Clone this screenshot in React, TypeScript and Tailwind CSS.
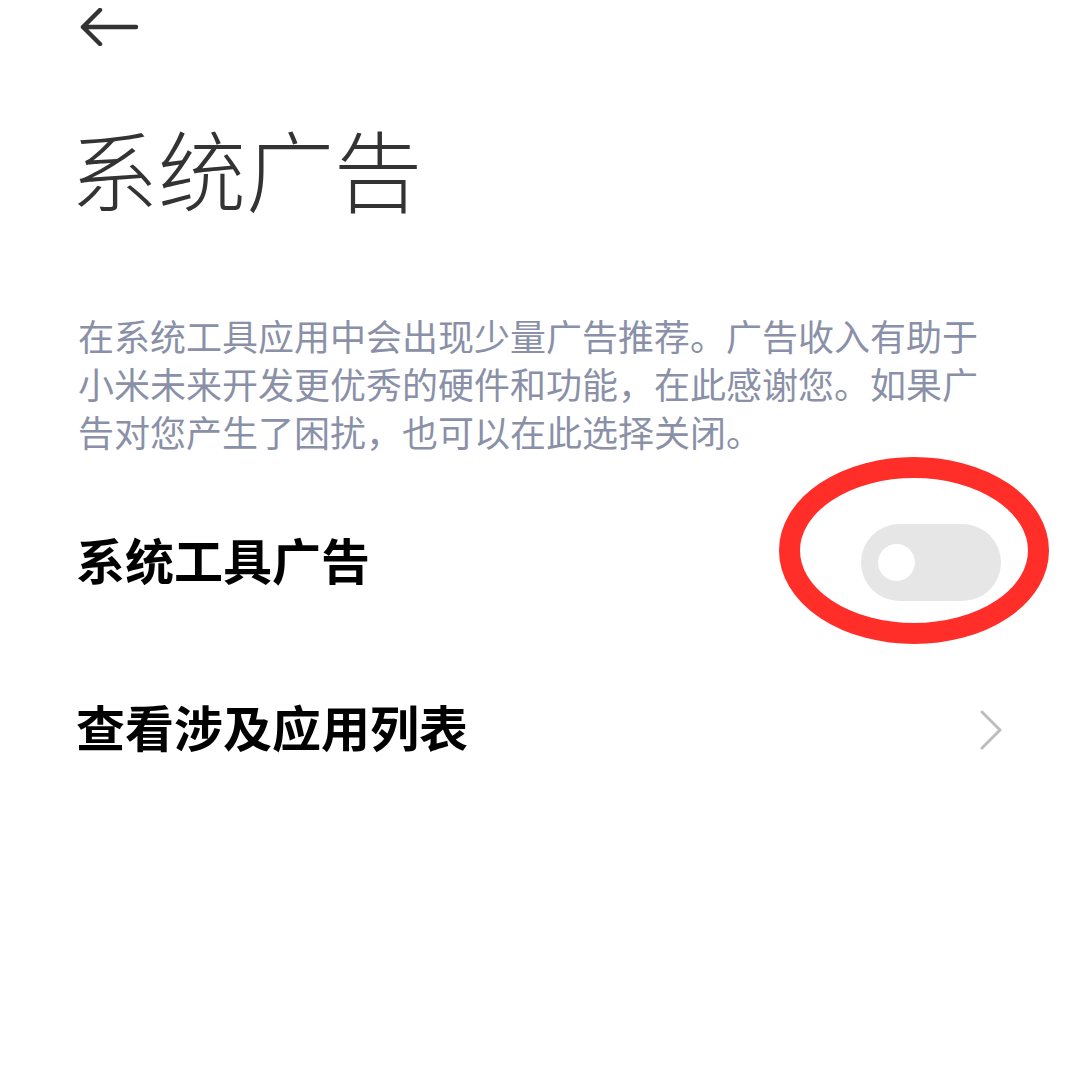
import React from "react";

export default function App() {
  return (
    <div
      className="relative w-[1080px] h-[1080px] bg-white overflow-hidden"
      style={{ fontFamily: '"Noto Sans CJK SC", "Noto Sans", sans-serif' }}
    >
      <div className="pl-[78px] pr-[79px]">
        <div className="h-[52px] flex items-start pt-[8px]">
          <svg width="58" height="38" viewBox="0 0 58 38" fill="none" className="ml-[2px]">
            <path d="M56 19 H3 M20 2 L3 19 L20 36" stroke="#333" strokeWidth="4.5" strokeLinecap="round" strokeLinejoin="round" />
          </svg>
        </div>
        <div className="mt-[71px] h-[88px] ml-[-8px] text-[88px] leading-[88px] font-light text-[#333333]">系统广告</div>
        <div className="mt-[100px] text-[36px] leading-[48px] text-[#8a90a8]">
          在系统工具应用中会出现少量广告推荐。广告收入有助于小米未来开发更优秀的硬件和功能，在此感谢您。如果广告对您产生了困扰，也可以在此选择关闭。
        </div>
        <div className="mt-[69px] h-[77px] flex items-center justify-between">
          <div className="mb-[8px] ml-[-2px] text-[49px] leading-[49px] font-bold text-black">系统工具广告</div>
          <div className="w-[140px] h-[77px] rounded-full bg-[#e6e6e6] flex items-center pl-[17px]">
            <div className="w-[37px] h-[37px] rounded-full bg-white" />
          </div>
        </div>
        <div className="mt-[90px] h-[77px] flex items-center justify-between">
          <div className="mb-[8px] ml-[-2px] text-[49px] leading-[49px] font-bold text-black">查看涉及应用列表</div>
          <svg width="24" height="40" viewBox="0 0 24 40" fill="none" className="mr-[-2px]">
            <path d="M3 2 L21 20 L3 38" stroke="#bdbdbd" strokeWidth="3" strokeLinecap="round" strokeLinejoin="round" />
          </svg>
        </div>
      </div>
      <svg className="absolute left-[779px] top-[457px]" width="270" height="187" viewBox="0 0 270 187" fill="none">
        <ellipse cx="135" cy="93.5" rx="124.5" ry="83" stroke="#ff2e28" strokeWidth="21" />
      </svg>
    </div>
  );
}
